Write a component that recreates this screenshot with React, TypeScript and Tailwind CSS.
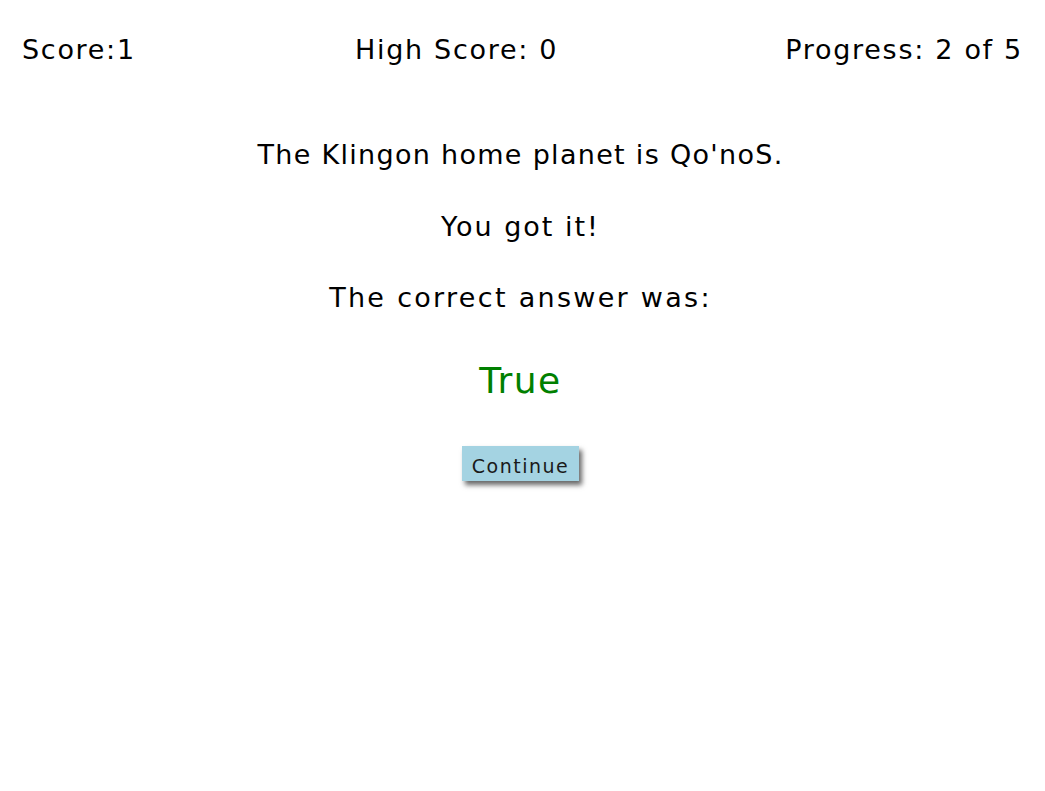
export default function App() {
  return (
    <div className="min-h-screen bg-white text-black font-['DejaVu_Sans',sans-serif]">
      <div className="flex justify-between items-center px-[22px] pt-[30px] text-[27px] leading-[40px] tracking-[1.7px]">
        <div>Score:1</div>
        <div className="pr-[8px]">High Score: 0</div>
        <div>Progress: 2 of 5</div>
      </div>
      <div className="flex flex-col items-center pr-[4px] text-[27px] leading-[40px] tracking-[1.3px]">
        <p className="mt-[65px]">The Klingon home planet is Qo'noS.</p>
        <p className="mt-[32px] tracking-[2px]">You got it!</p>
        <p className="mt-[31px] tracking-[2.3px]">The correct answer was:</p>
        <p className="mt-[40px] text-[36px] leading-[46px] tracking-[1.5px] text-[#008000]">True</p>
        <button className="mt-[42px] w-[117px] h-[35px] bg-[#a4d3e2] text-[19px] tracking-[1.5px] text-[#1a1a1a] shadow-[3px_4px_5px_rgba(0,0,0,0.6)]">
          Continue
        </button>
      </div>
    </div>
  );
}
